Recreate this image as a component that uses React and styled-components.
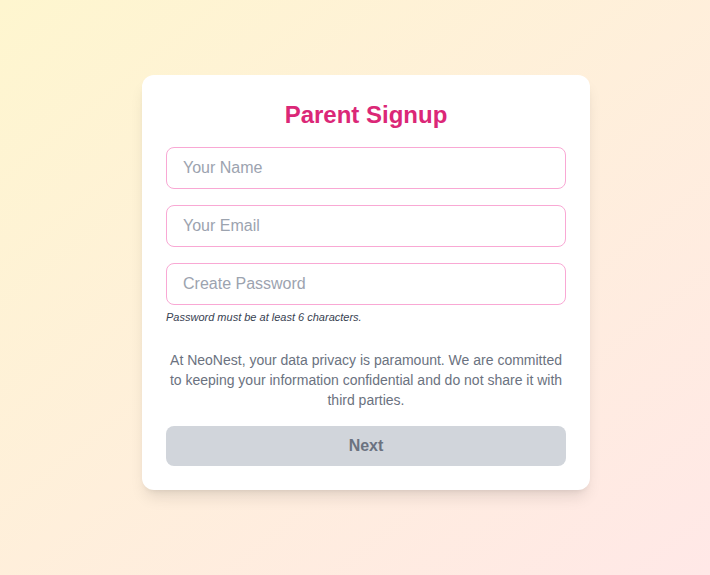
import React from "react";
import styled, { createGlobalStyle } from "styled-components";

const Global = createGlobalStyle`
  * { box-sizing: border-box; }
  html, body { margin: 0; padding: 0; }
  body {
    font-family: "Liberation Sans", Arial, sans-serif;
  }
`;

const Page = styled.div`
  min-height: 575px;
  background: linear-gradient(to bottom right, #fef6cf, #ffe8e7);
  display: flex;
  justify-content: center;
  align-items: flex-start;
  padding: 75px 0 0 22px;
`;

const Card = styled.div`
  width: 448px;
  background: #ffffff;
  border-radius: 12px;
  padding: 24px;
  box-shadow: 0 10px 15px -3px rgba(0, 0, 0, 0.1), 0 4px 6px -4px rgba(0, 0, 0, 0.1);
  display: flex;
  flex-direction: column;
`;

const Title = styled.h2`
  margin: 0 0 16px;
  font-size: 24px;
  line-height: 32px;
  font-weight: 700;
  color: #db2777;
  text-align: center;
`;

const Fields = styled.div`
  display: flex;
  flex-direction: column;
  gap: 16px;
`;

const Input = styled.input`
  width: 100%;
  height: 42px;
  padding: 8px 16px;
  border: 1px solid #f9a8d4;
  border-radius: 8px;
  font-family: inherit;
  font-size: 16px;
  line-height: 24px;
  color: #111827;
  background: #fff;
  outline: none;
  &::placeholder { color: #9ca3af; }
`;

const Hint = styled.p`
  margin: 4px 0 0;
  font-size: 11px;
  line-height: 16px;
  font-style: italic;
  color: #374151;
`;

const Notice = styled.p`
  margin: 25px 0 0;
  font-size: 14px;
  line-height: 20px;
  color: #6b7280;
  text-align: center;
`;

const Button = styled.button`
  margin-top: 16px;
  width: 100%;
  height: 40px;
  border: none;
  border-radius: 8px;
  background: #d1d5db;
  color: #6b7280;
  font-family: inherit;
  font-size: 16px;
  font-weight: 700;
  cursor: not-allowed;
`;

export default function App() {
  return (
    <>
      <Global />
      <Page>
        <Card>
          <Title>Parent Signup</Title>
          <Fields>
            <Input type="text" placeholder="Your Name" />
            <Input type="email" placeholder="Your Email" />
            <Input type="password" placeholder="Create Password" />
          </Fields>
          <Hint>Password must be at least 6 characters.</Hint>
          <Notice>
            At NeoNest, your data privacy is paramount. We are committed to keeping your
            information confidential and do not share it with third parties.
          </Notice>
          <Button disabled>Next</Button>
        </Card>
      </Page>
    </>
  );
}
